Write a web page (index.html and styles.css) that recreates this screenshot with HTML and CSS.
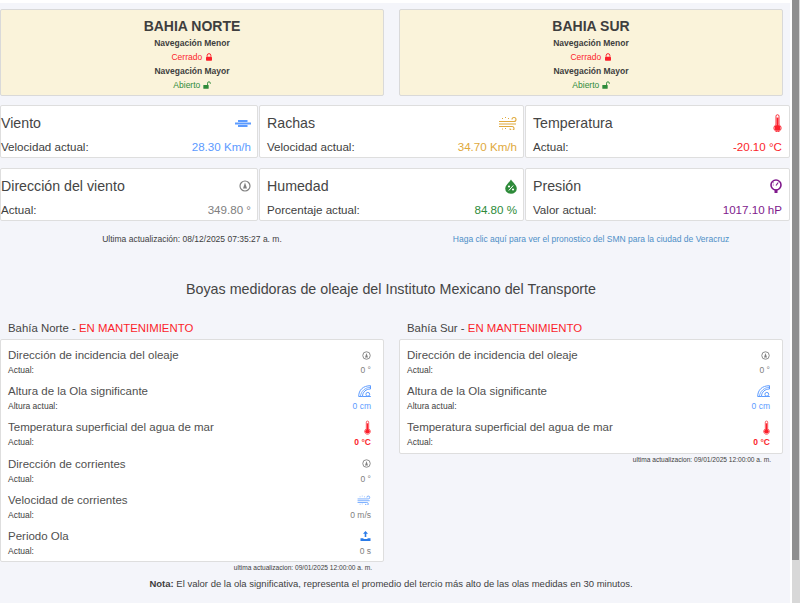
FILE: index.html
```html
<!DOCTYPE html>
<html lang="en">
<head>
    <meta charset="UTF-8">
    <meta name="viewport" content="width=device-width, initial-scale=1.0">
    <title>Puerto de Veracruz</title>
    <link rel="stylesheet" href="styles.css">
</head>
<body>

    <svg class="defs" width="0" height="0">
        <symbol id="i-lock" viewBox="0 0 12 12">
            <path d="M3.2 5.500V3.800a2.800 2.800 0 0 1 5.600 0v1.700" fill="none" stroke="currentColor" stroke-width="1.500"/>
            <rect x="1.500" y="5.500" width="9" height="6" rx="1" fill="currentColor"/>
        </symbol>
        <symbol id="i-unlock" viewBox="0 0 12 12">
            <path d="M6.800 6V3.300a2.100 2.100 0 0 1 4.200 0v1" fill="none" stroke="currentColor" stroke-width="1.400"/>
            <rect x="0.500" y="6" width="8" height="5.500" rx="0.800" fill="currentColor"/>
        </symbol>
        <symbol id="i-wind" viewBox="0 0 16 7">
            <path d="M3 1h9.500M0 3.500h16M3 6h9.500" fill="none" stroke="currentColor" stroke-width="1.800"/>
        </symbol>
        <symbol id="i-gust" viewBox="0 0 18 14">
            <path d="M0 5.500h15a2 2 0 1 0-2-2M0 8h17M0 10.500h13a2 2 0 1 1-2 2" fill="none" stroke="currentColor" stroke-width="1.100"/>
            <path d="M3 2.500h1M6 1.500h1M9 2.500h1M3 13h1M6 12.500h1" fill="none" stroke="currentColor" stroke-width="1" stroke-dasharray="1 1"/>
        </symbol>
        <symbol id="i-thermo" viewBox="0 0 10 20">
            <path d="M3.300 12V2.500a1.700 1.700 0 0 1 3.400 0V12a4 4 0 1 1-3.400 0z" fill="#fff" fill-opacity="0.300" stroke="currentColor" stroke-width="1"/>
            <rect x="4" y="4" width="2" height="10" fill="currentColor"/>
            <circle cx="5" cy="15.500" r="3.200" fill="currentColor"/>
        </symbol>
        <symbol id="i-compass" viewBox="0 0 12 12">
            <circle cx="6" cy="6" r="5" fill="none" stroke="currentColor" stroke-width="1.200"/>
            <path d="M6 2.500L8 8.500H4z" fill="currentColor"/>
        </symbol>
        <symbol id="i-drop" viewBox="0 0 12 15">
            <path d="M6 0.500C8 3.800 11.800 6 11.800 9.500a5.800 5.300 0 0 1-11.600 0C0.200 6 4 3.800 6 0.500z" fill="currentColor"/>
            <path d="M3.800 11.500L8.200 6.500" stroke="#fff" stroke-width="1"/>
            <circle cx="4" cy="7.500" r="1.100" fill="#fff"/>
            <circle cx="8" cy="10.500" r="1.100" fill="#fff"/>
        </symbol>
        <symbol id="i-gauge" viewBox="0 0 12 14">
            <circle cx="6" cy="6" r="5" fill="none" stroke="currentColor" stroke-width="1.600"/>
            <path d="M6 6.500L8.200 3.500" stroke="currentColor" stroke-width="1.200"/>
            <path d="M2.800 3.800h1M2.800 6h1" stroke="currentColor" stroke-width="0.800"/>
            <rect x="4.500" y="10.500" width="3" height="3.500" fill="currentColor"/>
        </symbol>
        <symbol id="i-wave" viewBox="0 0 13 12">
            <path d="M0.700 11.500C0.700 5 5 0.700 12.500 0.700V4C8 4 4.500 7 4.500 11.500z" fill="none" stroke="currentColor" stroke-width="1"/>
            <path d="M2.500 11C3 6.500 7 2.500 12.500 2.300" fill="none" stroke="currentColor" stroke-width="0.800"/>
            <circle cx="9.800" cy="9.300" r="1.900" fill="none" stroke="currentColor" stroke-width="1"/>
            <path d="M4.500 11.500h8.300" stroke="currentColor" stroke-width="1"/>
        </symbol>
        <symbol id="i-period" viewBox="0 0 11 10">
            <path d="M5.500 0L8 2.800H6.300V6H4.700V2.800H3z" fill="currentColor"/>
            <path d="M0.500 7.200h2.500l1 0.800h3l1-0.800h2.500V10H0.500z" fill="currentColor"/>
        </symbol>
    </svg>

    <div class="page">

        <!-- Estado de navegacion -->
        <div class="harbours">
            <div class="harbour">
                <h1>BAHIA NORTE</h1>
                <div class="nav-label">Navegación Menor</div>
                <div class="nav-state closed">Cerrado <svg class="lock"><use href="#i-lock"/></svg></div>
                <div class="nav-label">Navegación Mayor</div>
                <div class="nav-state open">Abierto <svg class="lock"><use href="#i-unlock"/></svg></div>
            </div>
            <div class="harbour">
                <h1>BAHIA SUR</h1>
                <div class="nav-label">Navegación Menor</div>
                <div class="nav-state closed">Cerrado <svg class="lock"><use href="#i-lock"/></svg></div>
                <div class="nav-label">Navegación Mayor</div>
                <div class="nav-state open">Abierto <svg class="lock"><use href="#i-unlock"/></svg></div>
            </div>
        </div>

        <!-- Meteorologia -->
        <div class="stats">
            <div class="stat">
                <div class="stat-head"><span>Viento</span><svg class="blue icon-wind"><use href="#i-wind"/></svg></div>
                <div class="stat-row"><span>Velocidad actual:</span><span class="blue">28.30 Km/h</span></div>
            </div>
            <div class="stat">
                <div class="stat-head"><span>Rachas</span><svg class="amber icon-gust"><use href="#i-gust"/></svg></div>
                <div class="stat-row"><span>Velocidad actual:</span><span class="amber">34.70 Km/h</span></div>
            </div>
            <div class="stat">
                <div class="stat-head"><span>Temperatura</span><svg class="red icon-thermo"><use href="#i-thermo"/></svg></div>
                <div class="stat-row"><span>Actual:</span><span class="red">-20.10 °C</span></div>
            </div>
            <div class="stat">
                <div class="stat-head"><span>Dirección del viento</span><svg class="grey icon-compass"><use href="#i-compass"/></svg></div>
                <div class="stat-row"><span>Actual:</span><span class="grey">349.80 °</span></div>
            </div>
            <div class="stat">
                <div class="stat-head"><span>Humedad</span><svg class="green icon-drop"><use href="#i-drop"/></svg></div>
                <div class="stat-row"><span>Porcentaje actual:</span><span class="green">84.80 %</span></div>
            </div>
            <div class="stat">
                <div class="stat-head"><span>Presión</span><svg class="purple icon-gauge"><use href="#i-gauge"/></svg></div>
                <div class="stat-row"><span>Valor actual:</span><span class="purple">1017.10 hP</span></div>
            </div>
        </div>

        <div class="updates">
            <div class="updated">Ultima actualización: 08/12/2025 07:35:27 a. m.</div>
            <a class="smn" href="#">Haga clic aquí para ver el pronostico del SMN para la ciudad de Veracruz</a>
        </div>

        <h2>Boyas medidoras de oleaje del Instituto Mexicano del Transporte</h2>

        <!-- Boyas -->
        <div class="buoys">
            <div class="buoy">
                <div class="buoy-title">Bahía Norte - <span class="red">EN MANTENIMIENTO</span></div>
                <div class="buoy-card">
                    <div class="reading">
                        <div class="reading-head"><span>Dirección de incidencia del oleaje</span><svg class="grey r-compass"><use href="#i-compass"/></svg></div>
                        <div class="reading-row"><span>Actual:</span><span class="grey">0 °</span></div>
                    </div>
                    <div class="reading">
                        <div class="reading-head"><span>Altura de la Ola significante</span><svg class="blue r-wave"><use href="#i-wave"/></svg></div>
                        <div class="reading-row"><span>Altura actual:</span><span class="blue">0 cm</span></div>
                    </div>
                    <div class="reading">
                        <div class="reading-head"><span>Temperatura superficial del agua de mar</span><svg class="red r-thermo"><use href="#i-thermo"/></svg></div>
                        <div class="reading-row"><span>Actual:</span><span class="red strong">0 °C</span></div>
                    </div>
                    <div class="reading">
                        <div class="reading-head"><span>Dirección de corrientes</span><svg class="grey r-compass"><use href="#i-compass"/></svg></div>
                        <div class="reading-row"><span>Actual:</span><span class="grey">0 °</span></div>
                    </div>
                    <div class="reading">
                        <div class="reading-head"><span>Velocidad de corrientes</span><svg class="blue r-gust"><use href="#i-gust"/></svg></div>
                        <div class="reading-row"><span>Actual:</span><span class="grey">0 m/s</span></div>
                    </div>
                    <div class="reading">
                        <div class="reading-head"><span>Periodo Ola</span><svg class="deep-blue r-period"><use href="#i-period"/></svg></div>
                        <div class="reading-row"><span>Actual:</span><span class="grey">0 s</span></div>
                    </div>
                </div>
                <div class="buoy-updated">ultima actualizacion: 09/01/2025 12:00:00 a. m.</div>
            </div>
            <div class="buoy">
                <div class="buoy-title">Bahía Sur - <span class="red">EN MANTENIMIENTO</span></div>
                <div class="buoy-card">
                    <div class="reading">
                        <div class="reading-head"><span>Dirección de incidencia del oleaje</span><svg class="grey r-compass"><use href="#i-compass"/></svg></div>
                        <div class="reading-row"><span>Actual:</span><span class="grey">0 °</span></div>
                    </div>
                    <div class="reading">
                        <div class="reading-head"><span>Altura de la Ola significante</span><svg class="blue r-wave"><use href="#i-wave"/></svg></div>
                        <div class="reading-row"><span>Altura actual:</span><span class="blue">0 cm</span></div>
                    </div>
                    <div class="reading">
                        <div class="reading-head"><span>Temperatura superficial del agua de mar</span><svg class="red r-thermo"><use href="#i-thermo"/></svg></div>
                        <div class="reading-row"><span>Actual:</span><span class="red strong">0 °C</span></div>
                    </div>
                </div>
                <div class="buoy-updated">ultima actualizacion: 09/01/2025 12:00:00 a. m.</div>
            </div>
        </div>

        <p class="note"><b>Nota:</b> El valor de la ola significativa, representa el promedio del tercio más alto de las olas medidas en 30 minutos.</p>
    </div>

    <div class="scrollbar"><div class="scrollbar-thumb"></div></div>

</body>
</html>
```

FILE: styles.css
```css
html, body {
    height: 603px;
    overflow: hidden;
}
body {
    font-family: 'Liberation Sans', Arial, sans-serif;
    margin: 0;
    padding: 0;
    background: #fff;
    color: #3e3e3e;
}
.defs {
    position: absolute;
}
.page {
    width: 790px;
    height: 600px;
    margin-top: 3px;
    background: #f4f5fa;
    overflow: hidden;
}
.scrollbar {
    position: fixed;
    top: 0;
    right: 0;
    width: 8px;
    height: 603px;
    background: #d8d8d8;
}
.scrollbar-thumb {
    width: 7px;
    height: 560px;
    background: #8f8f8f;
}
.blue { color: #5c9bff; }
.amber { color: #e0a93c; }
.red { color: #fb1f2b; }
.grey { color: #808080; }
.green { color: #2e8b3a; }
.purple { color: #80198c; }
.deep-blue { color: #2a7be8; }
.strong { font-weight: 700; }

.harbours {
    display: grid;
    grid-template-columns: 384px 384px;
    column-gap: 15px;
    padding-top: 6px;
}
.harbour {
    height: 87px;
    box-sizing: border-box;
    padding-top: 7px;
    background: #faf3da;
    border: 1px solid #d9d9d9;
    border-radius: 2px;
    text-align: center;
}
.harbour h1 {
    margin: 0 0 1px;
    font-size: 14px;
    line-height: 18px;
    font-weight: 700;
}
.nav-label {
    font-size: 8.500px;
    font-weight: 700;
    line-height: 14px;
}
.nav-state {
    font-size: 8.500px;
    line-height: 14px;
}
.closed { color: #fb1f2b; }
.open { color: #2e8b3a; }
.lock {
    width: 8px;
    height: 8px;
    vertical-align: -1px;
}

.stats {
    display: grid;
    grid-template-columns: 258px 265px 265px;
    grid-auto-rows: 53px;
    column-gap: 1px;
    row-gap: 10px;
    margin-top: 9px;
}
.stat {
    box-sizing: border-box;
    padding: 7px 6px 0 7px;
    background: #fff;
    border: 1px solid #dedede;
    border-radius: 2px;
}
.stat:nth-child(3n+1) {
    padding-left: 0;
}
.stat:nth-child(3n) {
    padding-right: 7px;
}
.stat-head {
    display: flex;
    justify-content: space-between;
    align-items: center;
    height: 20px;
    font-size: 14.200px;
    color: #454545;
}
.stat-row {
    display: flex;
    justify-content: space-between;
    margin-top: 7px;
    font-size: 11.600px;
    line-height: 14px;
}
.icon-wind { width: 16px; height: 7px; }
.icon-gust { width: 18px; height: 14px; }
.icon-thermo { width: 9px; height: 18px; }
.icon-compass { width: 12px; height: 12px; }
.icon-drop { width: 12px; height: 15px; }
.icon-gauge { width: 12px; height: 14px; }

.updates {
    display: grid;
    grid-template-columns: 384px 384px;
    column-gap: 15px;
    margin-top: 12px;
    font-size: 8.500px;
    line-height: 12px;
    text-align: center;
}
.updated {
    color: #3e3e3e;
}
.smn {
    color: #4e8fc7;
    text-decoration: none;
}

h2 {
    margin: 35px 0 0;
    padding-right: 8px;
    font-size: 14.300px;
    line-height: 18px;
    font-weight: 400;
    text-align: center;
    color: #454545;
}

.buoys {
    display: grid;
    grid-template-columns: 384px 384px;
    column-gap: 15px;
    align-items: start;
    margin-top: 23px;
}
.buoy-title {
    padding-left: 8px;
    font-size: 11.400px;
    line-height: 14px;
    color: #454545;
}
.buoy-title .red {
    color: #fb1f2b;
}
.buoy-card {
    box-sizing: border-box;
    margin-top: 4px;
    padding: 7px 12px 0 7px;
    background: #fff;
    border: 1px solid #dedede;
    border-radius: 2px;
}
.reading {
    height: 36.200px;
}
.reading:last-child {
    height: 33.500px;
}
.reading-head {
    display: flex;
    justify-content: space-between;
    align-items: center;
    height: 16px;
    font-size: 11.500px;
    color: #505050;
}
.reading-row {
    display: flex;
    justify-content: space-between;
    margin-top: 1px;
    font-size: 8.500px;
    line-height: 12px;
}
.r-compass { width: 9px; height: 9px; }
.r-wave { width: 13px; height: 12px; }
.r-thermo { width: 7px; height: 15px; }
.r-gust { width: 14px; height: 10px; }
.r-period { width: 11px; height: 10px; }

.buoy-updated {
    margin-top: 1px;
    padding-right: 12px;
    font-size: 6.600px;
    line-height: 10px;
    text-align: right;
}
.note {
    margin: 5px 0 0;
    padding-right: 8px;
    font-size: 9.500px;
    line-height: 12px;
    text-align: center;
}
```
